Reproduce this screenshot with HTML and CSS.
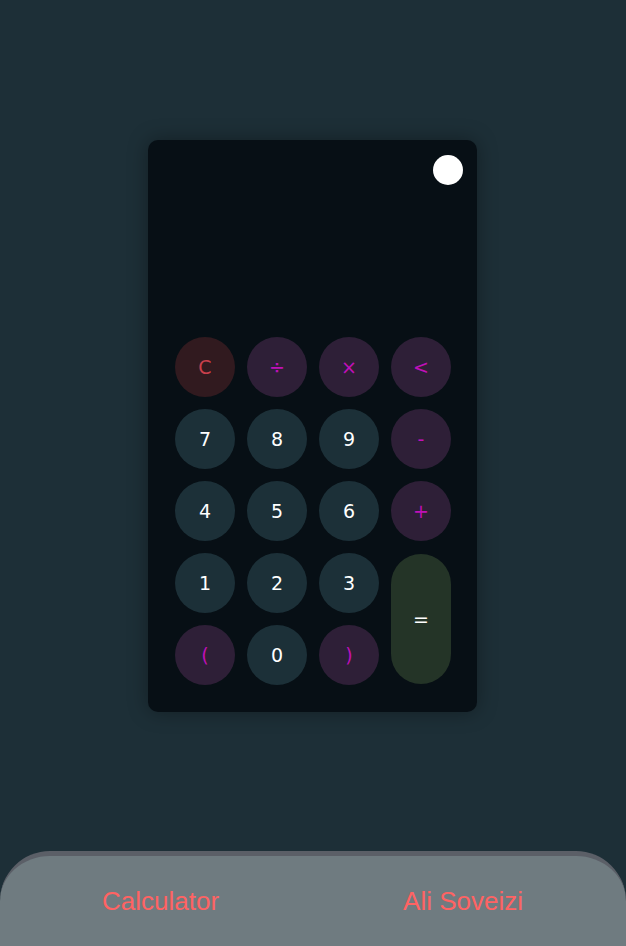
FILE: index.html
```html
<!DOCTYPE html>
<html>
<head>
<meta charset="utf-8">
<link rel="stylesheet" href="styles.css">
</head>
<body>
<main class="stage">
  <section class="calc">
    <div class="calc-top"><span class="toggle"></span></div>
    <div class="display"></div>
    <div class="keys">
      <button class="key key-clear">C</button>
      <button class="key key-op">÷</button>
      <button class="key key-op">×</button>
      <button class="key key-op">&lt;</button>
      <button class="key key-num">7</button>
      <button class="key key-num">8</button>
      <button class="key key-num">9</button>
      <button class="key key-op">-</button>
      <button class="key key-num">4</button>
      <button class="key key-num">5</button>
      <button class="key key-num">6</button>
      <button class="key key-op">+</button>
      <button class="key key-num">1</button>
      <button class="key key-num">2</button>
      <button class="key key-num">3</button>
      <button class="key key-eq">=</button>
      <button class="key key-op">(</button>
      <button class="key key-num">0</button>
      <button class="key key-op">)</button>
    </div>
  </section>
</main>
<footer class="footer">
  <span class="footer-item">Calculator</span>
  <span class="footer-item">Ali Soveizi</span>
</footer>
</body>
</html>
```
FILE: styles.css
```css
* { box-sizing: border-box; }
html, body { margin: 0; padding: 0; }
body {
  background: #1d2f37;
  min-height: 946px;
  height: 100vh;
  display: flex;
  flex-direction: column;
  overflow: hidden;
  font-family: "DejaVu Sans", sans-serif;
}
.stage {
  flex: 1;
  display: flex;
  align-items: center;
  justify-content: center;
}
.calc {
  width: 329px;
  height: 572px;
  margin-right: 1px;
  background: #070f15;
  border-radius: 10px;
  box-shadow: 0 0 20px rgba(0, 0, 0, 0.35);
  display: flex;
  flex-direction: column;
}
.calc-top {
  display: flex;
  justify-content: flex-end;
  padding: 15px 14px 0 0;
}
.toggle {
  width: 30px;
  height: 30px;
  border-radius: 50%;
  background: #ffffff;
}
.display { flex: 1; }
.keys {
  display: grid;
  grid-template-columns: repeat(4, 60px);
  grid-auto-rows: 60px;
  gap: 12px;
  padding: 0 26px 27px 27px;
}
.key {
  border: none;
  border-radius: 30px;
  width: 60px;
  height: 60px;
  padding: 0;
  font-family: "DejaVu Sans", sans-serif;
  font-size: 19px;
  display: flex;
  align-items: center;
  justify-content: center;
}
.key-num { background: #1c3038; color: #ffffff; }
.key-op { background: #2e1f37; color: #c010b8; }
.key-clear { background: #311a1f; color: #c8404c; }
.key-eq {
  background: #243427;
  color: #ffffff;
  grid-row: span 2;
  height: 130px;
  align-self: center;
}
.footer {
  height: 95px;
  flex: none;
  background: #6f7b80;
  border-top: 5px solid #5b5f67;
  border-radius: 50px 50px 0 0;
  display: flex;
  align-items: center;
  justify-content: space-between;
  padding: 0 103px 0 102px;
  font-family: "Liberation Sans", Arial, sans-serif;
  font-size: 26px;
  color: #ff6363;
}
```
